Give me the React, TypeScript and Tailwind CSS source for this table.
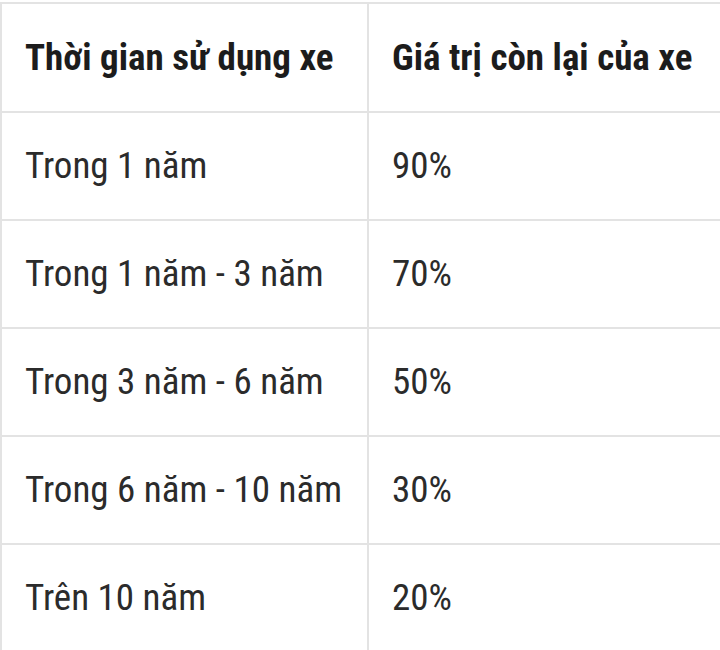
const ROWS = [
  { time: 'Trong 1 năm', value: '90%' },
  { time: 'Trong 1 năm - 3 năm', value: '70%' },
  { time: 'Trong 3 năm - 6 năm', value: '50%' },
  { time: 'Trong 6 năm - 10 năm', value: '30%' },
  { time: 'Trên 10 năm', value: '20%' },
]

export default function App() {
  return (
    <div
      className="w-[720px] h-[650px] overflow-hidden bg-white pt-[2px]"
      style={{ fontFamily: "'Roboto Condensed', Roboto, sans-serif" }}
    >
      <table className="w-[780px] border-collapse text-[37px] [font-stretch:condensed]">
        <thead>
          <tr className="h-[109px]">
            <th className="w-[367px] border-2 border-[#e3e3e3] pl-[23px] text-left font-bold text-[#1c1c1c]">
              Thời gian sử dụng xe
            </th>
            <th className="border-2 border-[#e3e3e3] pl-[23px] text-left font-bold text-[#1c1c1c]">
              Giá trị còn lại của xe
            </th>
          </tr>
        </thead>
        <tbody>
          {ROWS.map((row) => (
            <tr key={row.time} className="h-[108px]">
              <td className="border-2 border-[#e3e3e3] pl-[23px] text-[#2b2b2b]">{row.time}</td>
              <td className="border-2 border-[#e3e3e3] pl-[23px] text-[#2b2b2b]">{row.value}</td>
            </tr>
          ))}
        </tbody>
      </table>
    </div>
  )
}
